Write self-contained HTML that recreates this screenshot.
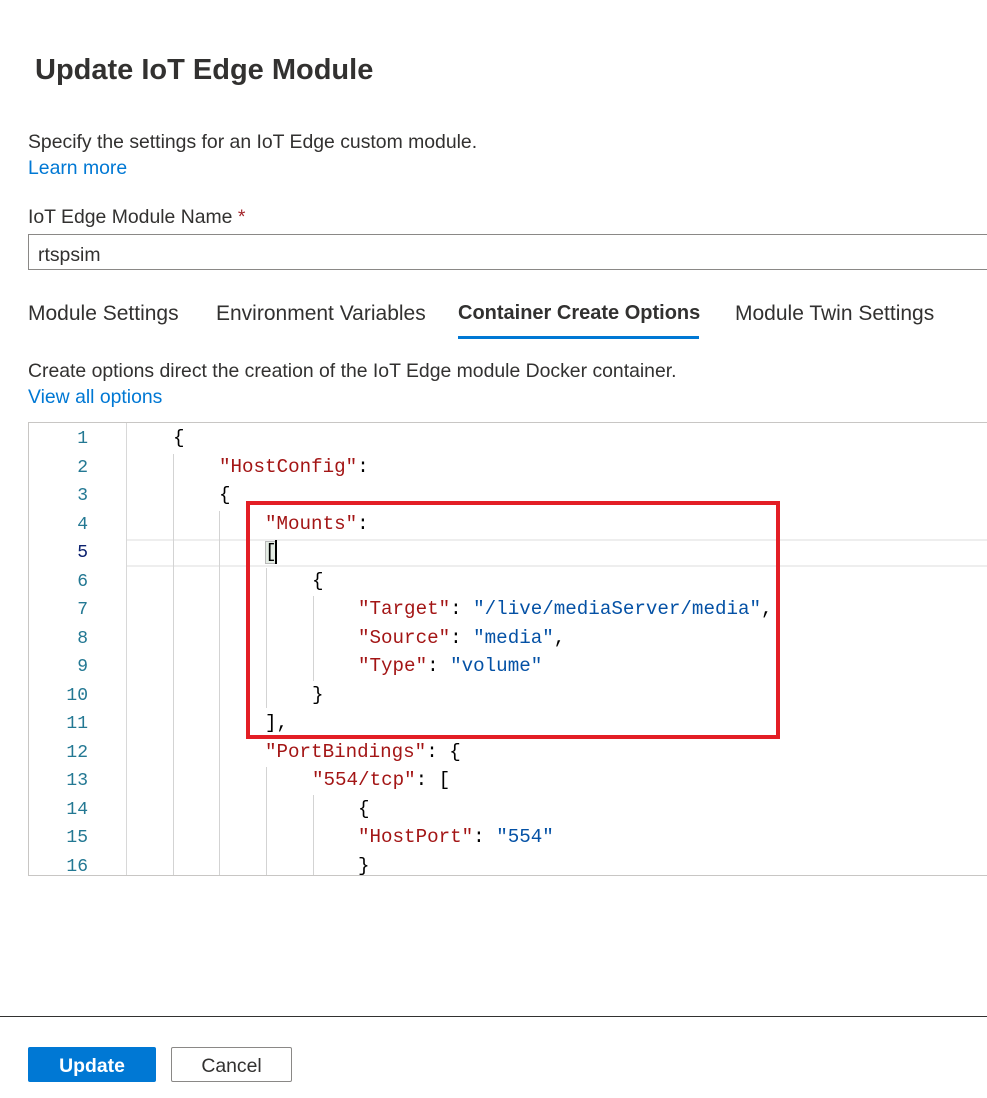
<!DOCTYPE html>
<html><head><meta charset="utf-8"><style>
body{margin:0;width:987px;height:1098px;background:#fff;font-family:"Liberation Sans",sans-serif;color:#323130;position:relative;overflow:hidden}
.a{position:absolute;white-space:nowrap}
h1{position:absolute;left:35px;top:54px;margin:0;font-size:29px;font-weight:600;color:#323130}
.link{color:#0078d4}
.tab{position:absolute;top:302px;font-size:21px;color:#323130}
.ed{position:absolute;left:28px;top:422px;width:970px;height:452px;border:1px solid #c8c6c4;overflow:hidden}
.ln{position:absolute;left:0;width:59px;text-align:right;font-family:"Liberation Mono",monospace;font-size:18px;color:#237893}
.cd{position:absolute;font-family:"Liberation Mono",monospace;font-size:19.2px;color:#000;white-space:pre}
.k{color:#a31515}.s{color:#0451a5}
.g{position:absolute;width:1px;background:#d3d3d3}
</style></head><body>
<h1>Update IoT Edge Module</h1>
<div class="a" style="left:28px;top:131px;font-size:19.4px">Specify the settings for an IoT Edge custom module.</div>
<div class="a link" style="left:28px;top:157px;font-size:19.4px">Learn more</div>
<div class="a" style="left:28px;top:206px;font-size:19.4px">IoT Edge Module Name <span style="color:#a4262c">*</span></div>
<div class="a" style="left:28px;top:234px;width:970px;height:36px;border:1px solid #8a8886;box-sizing:border-box"></div>
<div class="a" style="left:38px;top:244px;font-size:19.4px">rtspsim</div>
<div class="tab" style="left:28px">Module Settings</div>
<div class="tab" style="left:216px">Environment Variables</div>
<div class="tab" style="left:458px;font-weight:600;font-size:20px">Container Create Options</div>
<div class="a" style="left:458px;top:336px;width:241px;height:3px;background:#0078d4"></div>
<div class="tab" style="left:735px">Module Twin Settings</div>
<div class="a" style="left:28px;top:360px;font-size:19.4px">Create options direct the creation of the IoT Edge module Docker container.</div>
<div class="a link" style="left:28px;top:386px;font-size:19.4px">View all options</div>
<div class="ed">
<div style="position:absolute;left:97px;top:0;width:1px;height:452px;background:#d8d8d8"></div>
<div style="position:absolute;left:98px;top:116px;width:880px;height:24px;border-top:2px solid #eee;border-bottom:2px solid #eee"></div>
<div class="g" style="left:144px;top:31px;height:430px"></div>
<div class="g" style="left:190px;top:88px;height:370px"></div>
<div class="g" style="left:237px;top:145px;height:140px"></div>
<div class="g" style="left:284px;top:173px;height:85px"></div>
<div class="g" style="left:237px;top:344px;height:120px"></div>
<div class="g" style="left:284px;top:372px;height:90px"></div>
<div style="position:absolute;left:236px;top:118px;width:11px;height:23px;background:#e4ece4;border:1px solid #b9b9b9;box-sizing:border-box"></div>
<div style="position:absolute;left:246px;top:117px;width:2px;height:24px;background:#000"></div>
<div class="ln" style="top:6px">1</div><div class="ln" style="top:35px">2</div><div class="ln" style="top:63px">3</div><div class="ln" style="top:92px">4</div><div class="ln" style="top:120px;color:#0b216f">5</div><div class="ln" style="top:149px">6</div><div class="ln" style="top:177px">7</div><div class="ln" style="top:206px">8</div><div class="ln" style="top:234px">9</div><div class="ln" style="top:263px">10</div><div class="ln" style="top:291px">11</div><div class="ln" style="top:320px">12</div><div class="ln" style="top:348px">13</div><div class="ln" style="top:377px">14</div><div class="ln" style="top:405px">15</div><div class="ln" style="top:434px">16</div>
<div class="cd" style="left:144px;top:4px">{</div>
<div class="cd" style="left:190px;top:33px"><span class="k">"HostConfig"</span>:</div>
<div class="cd" style="left:190px;top:61px">{</div>
<div class="cd" style="left:236px;top:90px"><span class="k">"Mounts"</span>:</div>
<div class="cd" style="left:236px;top:118px">[</div>
<div class="cd" style="left:283px;top:147px">{</div>
<div class="cd" style="left:329px;top:175px"><span class="k">"Target"</span>: <span class="s">"/live/mediaServer/media"</span>,</div>
<div class="cd" style="left:329px;top:204px"><span class="k">"Source"</span>: <span class="s">"media"</span>,</div>
<div class="cd" style="left:329px;top:232px"><span class="k">"Type"</span>: <span class="s">"volume"</span></div>
<div class="cd" style="left:283px;top:261px">}</div>
<div class="cd" style="left:236px;top:289px">],</div>
<div class="cd" style="left:236px;top:318px"><span class="k">"PortBindings"</span>: {</div>
<div class="cd" style="left:283px;top:346px"><span class="k">"554/tcp"</span>: [</div>
<div class="cd" style="left:329px;top:375px">{</div>
<div class="cd" style="left:329px;top:403px"><span class="k">"HostPort"</span>: <span class="s">"554"</span></div>
<div class="cd" style="left:329px;top:432px">}</div>
</div>
<div class="a" style="left:246px;top:501px;width:534px;height:238px;border:4px solid #e31e25;box-sizing:border-box"></div>
<div class="a" style="left:0;top:1016px;width:987px;height:1px;background:#323130"></div>
<div class="a" style="left:28px;top:1047px;width:128px;height:35px;background:#0078d4;border-radius:2px;color:#fff;font-size:19.4px;font-weight:600;text-align:center;line-height:38px">Update</div>
<div class="a" style="left:171px;top:1047px;width:121px;height:35px;border:1px solid #8a8886;box-sizing:border-box;border-radius:2px;font-size:19.4px;text-align:center;line-height:37px">Cancel</div>
</body></html>
